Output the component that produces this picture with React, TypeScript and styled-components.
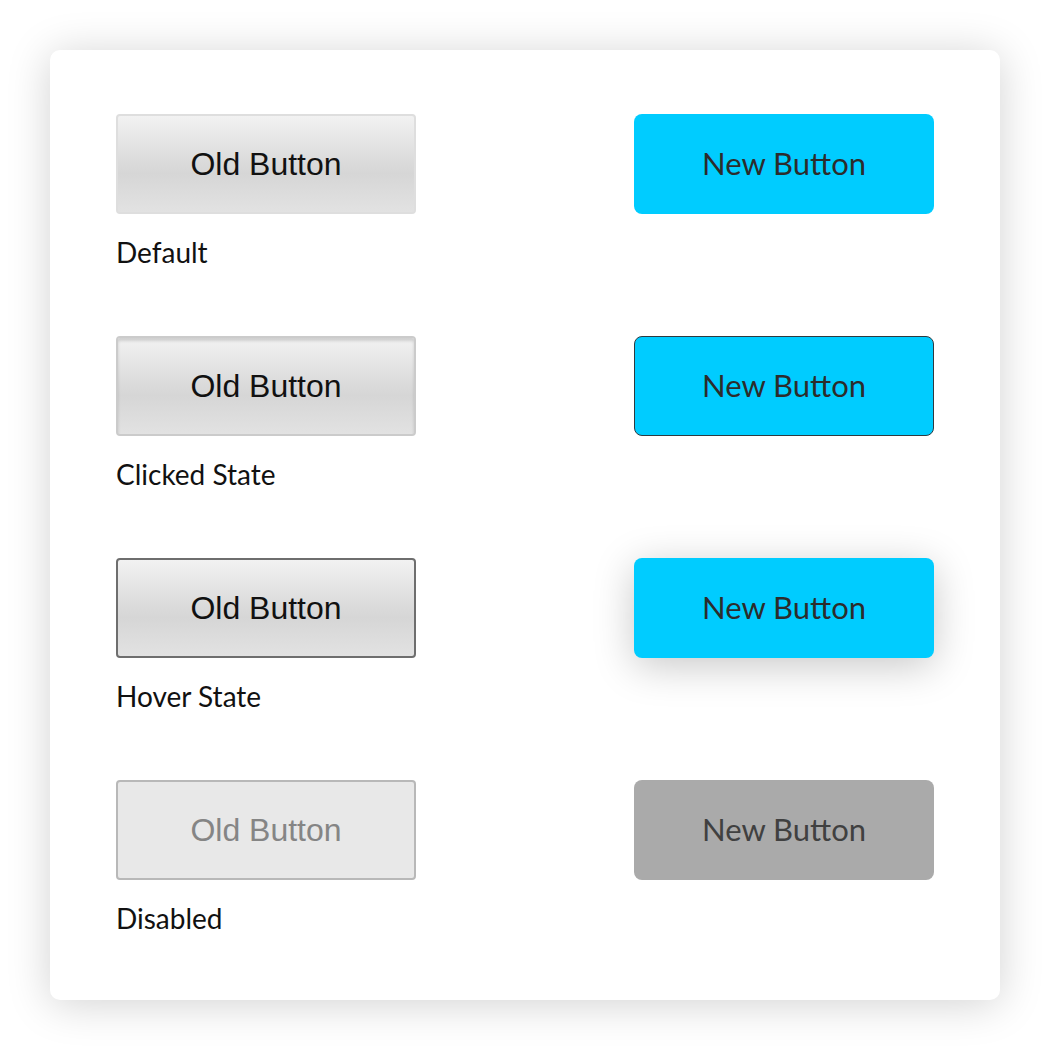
import React from "react";
import styled, { createGlobalStyle, css } from "styled-components";

const Global = createGlobalStyle`
  html, body { margin: 0; padding: 0; background: #ffffff; }
  body { font-family: "Lato", "Open Sans", sans-serif; }
`;

const Page = styled.div`
  padding: 50px;
  width: 950px;
`;

const Card = styled.div`
  background: #ffffff;
  border-radius: 10px;
  box-shadow: 0 4px 44px rgba(0, 0, 0, 0.18);
  padding: 64px 66px 67px 66px;
  display: grid;
  grid-template-columns: 300px 300px;
  justify-content: space-between;
  row-gap: 69px;
`;

const Cell = styled.div`
  display: flex;
  flex-direction: column;
`;

type State = "default" | "clicked" | "hover" | "disabled";

const OldButton = styled.div<{ $state: State }>`
  box-sizing: border-box;
  width: 300px;
  height: 100px;
  border-radius: 4px;
  display: flex;
  align-items: center;
  justify-content: center;
  font-family: "Liberation Sans", Arial, sans-serif;
  font-size: 32px;
  color: #111;
  background: linear-gradient(#f2f2f2 0%, #dcdcdc 45%, #d6d6d6 60%, #e2e2e2 100%);
  border: 2px solid #dedede;
  ${(p) =>
    p.$state === "clicked" &&
    css`
      border-color: #cbcbcb;
      box-shadow: inset 0 3px 3px rgba(0, 0, 0, 0.14);
    `}
  ${(p) =>
    p.$state === "hover" &&
    css`
      border-color: #6e6e6e;
    `}
  ${(p) =>
    p.$state === "disabled" &&
    css`
      background: #e8e8e8;
      border-color: #b8b8b8;
      color: #858585;
    `}
`;

const NewButton = styled.div<{ $state: State }>`
  box-sizing: border-box;
  width: 300px;
  height: 100px;
  padding-bottom: 3px;
  border-radius: 8px;
  display: flex;
  align-items: center;
  justify-content: center;
  font-family: "Lato", "Open Sans", sans-serif;
  font-size: 31px;
  color: #2c2c2c;
  background: #00ccff;
  ${(p) =>
    p.$state === "clicked" &&
    css`
      border: 1.5px solid #2e3a40;
    `}
  ${(p) =>
    p.$state === "hover" &&
    css`
      box-shadow: 0 8px 40px rgba(0, 0, 0, 0.22);
    `}
  ${(p) =>
    p.$state === "disabled" &&
    css`
      background: #aaaaaa;
      color: #404040;
    `}
`;

const Label = styled.div`
  margin-top: 23px;
  line-height: 30px;
  font-family: "Lato", "Open Sans", sans-serif;
  font-size: 28px;
  color: #111;
`;

const rows: { state: State; label: string }[] = [
  { state: "default", label: "Default" },
  { state: "clicked", label: "Clicked State" },
  { state: "hover", label: "Hover State" },
  { state: "disabled", label: "Disabled" },
];

export default function App() {
  return (
    <Page>
      <Global />
      <Card>
        {rows.map((r) => (
          <React.Fragment key={r.state}>
            <Cell>
              <OldButton $state={r.state}>Old Button</OldButton>
              <Label>{r.label}</Label>
            </Cell>
            <Cell>
              <NewButton $state={r.state}>New Button</NewButton>
            </Cell>
          </React.Fragment>
        ))}
      </Card>
    </Page>
  );
}
